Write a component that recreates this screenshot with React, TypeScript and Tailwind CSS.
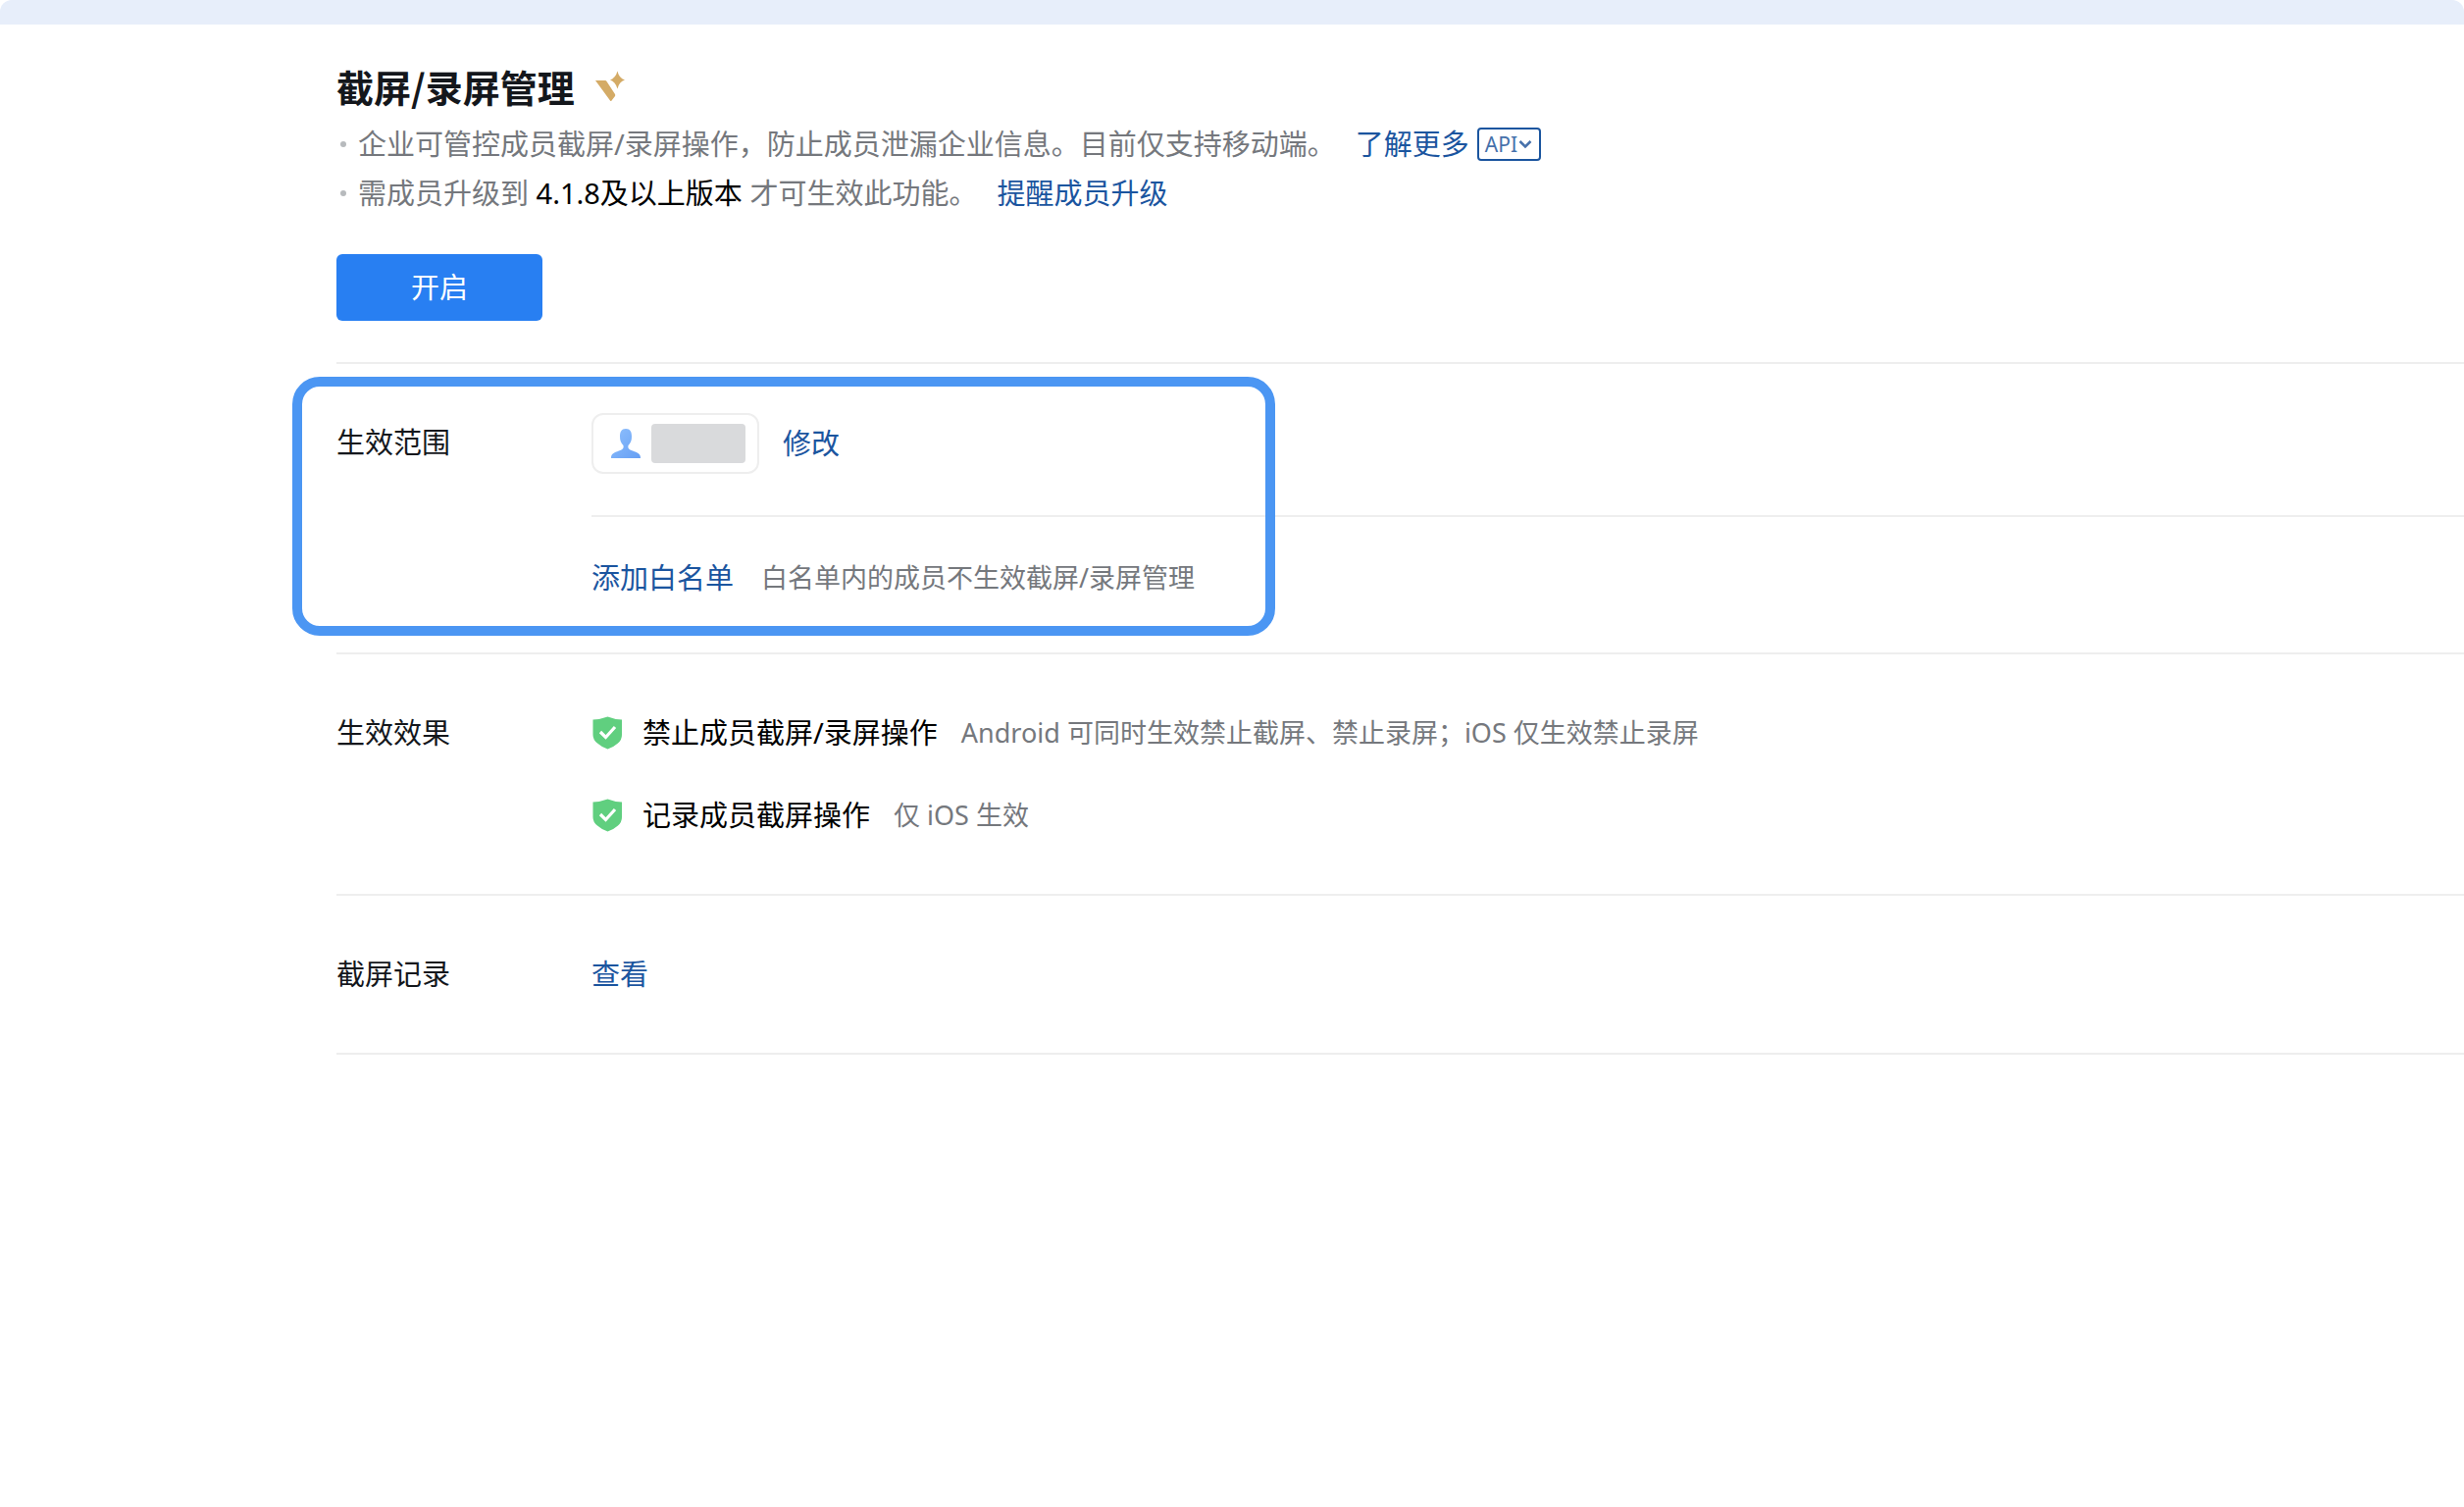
import React from "react";

const Vip = () => (
  <svg className="h-8 w-8" viewBox="0 0 32 32" fill="#d4ab66" aria-hidden="true">
    <path d="M1 10H11Q12 10 12.500 11L21 24Q21.500 25 21 26L17.500 30.500Q17 31.500 16 30.500Z" />
    <path d="M23.500 0.500Q25 7.500 31 9.500Q25 11.500 23.500 18.500Q21.500 11.500 16 9.500Q21.500 7.500 23.500 0.500Z" />
  </svg>
);

const Shield = () => (
  <svg className="h-[34px] w-8 shrink-0" viewBox="0 0 32 34" fill="none" aria-hidden="true">
    <path d="M1.500 3.500Q10 3 16.500 0.500Q22.500 3 31 3.500V19Q31 24 27 27.500Q22.500 31.500 16.500 33.500Q10.500 31.500 6 27.500Q1.500 24 1.500 19Z" fill="#60cf7f" />
    <path d="M9 16L14.500 21.500L24 11" stroke="#fff" strokeWidth="3.200" />
  </svg>
);

const Person = () => (
  <svg className="h-8 w-8 shrink-0" viewBox="0 0 32 32" aria-hidden="true">
    <defs>
      <linearGradient id="person" x1="0" y1="0" x2="1" y2="1">
        <stop offset="0" stopColor="#8fc0fd" />
        <stop offset="1" stopColor="#669ff4" />
      </linearGradient>
    </defs>
    <path d="M16 1C20.500 1 22 4 22 9C22 13 21 15.500 18.500 18C18 21 19 22 23 23.500C28 25.500 31 26 31 31H1C1 26 4 25.500 9 23.500C13 22 14 21 13.500 18C11 15.500 10 13 10 9C10 4 11.500 1 16 1Z" fill="url(#person)" />
  </svg>
);

const link = "text-[#1b559f] hover:underline";

function Bullet() {
  return <span className="mr-3 size-1.5 shrink-0 rounded-full bg-[#b7babd]" />;
}

function Effect({ title, note }: { title: string; note: string }) {
  return (
    <li className="flex items-center">
      <Shield />
      <span className="ml-5 text-black">{title}</span>
      <span className="ml-6 text-[27px] text-[#75787d]">{note}</span>
    </li>
  );
}

export default function App() {
  return (
    <div className="min-h-screen bg-white font-['Noto_Sans','Noto_Sans_CJK_SC',sans-serif] text-[29px] leading-[44px] text-[#14171c]">
      <div className="h-[25px] rounded-t-xl bg-[#e7eefa]" />
      <main className="pl-[343px]">
        <header className="border-b-2 border-[#eeeeee] pt-9 pb-[42px]">
          <div className="flex items-center gap-5">
            <h1 className="font-['Noto_Sans_CJK_SC',sans-serif] text-[38px] leading-[54px] font-bold">截屏/录屏管理</h1>
            <Vip />
          </div>
          <ul className="mt-2.5 pl-1 text-[#75787d]">
            <li className="mb-1.5 flex items-center">
              <Bullet />
              <span>企业可管控成员截屏/录屏操作，防止成员泄漏企业信息。目前仅支持移动端。</span>
              <a href="#more" className={`ml-5 ${link}`}>了解更多</a>
              <button className="ml-2 flex h-[34px] items-center rounded-sm border-2 border-[#1b559f] px-1.5 text-[21px] text-[#4671ab]">
                API
                <svg className="h-3 w-4" viewBox="0 0 16 12" fill="none" stroke="currentColor" strokeWidth="2.500" aria-hidden="true">
                  <path d="M2.500 3L8 8.500L13.500 3" />
                </svg>
              </button>
            </li>
            <li className="flex items-center">
              <Bullet />
              <span>需成员升级到 <span className="text-black">4.1.8及以上版本</span> 才可生效此功能。</span>
              <a href="#remind" className={`ml-5 ${link}`}>提醒成员升级</a>
            </li>
          </ul>
          <button className="mt-10 h-[68px] w-[210px] rounded-md bg-[#287ff2] text-white">开启</button>
        </header>

        <section className="relative flex border-b-2 border-[#eeeeee]">
          <h2 className="w-[260px] shrink-0 pt-[58px]">生效范围</h2>
          <div className="grow">
            <div className="flex items-center border-b-2 border-[#eeeeee] pt-[50px] pb-[42px]">
              <div className="flex h-[62px] items-center gap-2.5 rounded-xl border-2 border-[#eeeeee] pr-3 pl-[17px]">
                <Person />
                <span className="h-10 w-24 rounded-sm bg-[#d9dadc]" />
              </div>
              <a href="#edit" className={`ml-6 ${link}`}>修改</a>
            </div>
            <div className="flex items-center pt-10 pb-[54px]">
              <a href="#whitelist" className={link}>添加白名单</a>
              <span className="ml-7 text-[27px] text-[#75787d]">白名单内的成员不生效截屏/录屏管理</span>
            </div>
          </div>
          <div className="pointer-events-none absolute top-[13px] bottom-[17px] -left-[45px] w-[1002px] rounded-[28px] border-10 border-[#4b96f3]" />
        </section>

        <section className="flex border-b-2 border-[#eeeeee] pt-[58px] pb-[58px]">
          <h2 className="w-[260px] shrink-0">生效效果</h2>
          <ul className="grid gap-10">
            <Effect title="禁止成员截屏/录屏操作" note="Android 可同时生效禁止截屏、禁止录屏；iOS 仅生效禁止录屏" />
            <Effect title="记录成员截屏操作" note="仅 iOS 生效" />
          </ul>
        </section>

        <section className="flex border-b-2 border-[#eeeeee] pt-[58px] pb-[58px]">
          <h2 className="w-[260px] shrink-0">截屏记录</h2>
          <a href="#records" className={link}>查看</a>
        </section>
      </main>
    </div>
  );
}
